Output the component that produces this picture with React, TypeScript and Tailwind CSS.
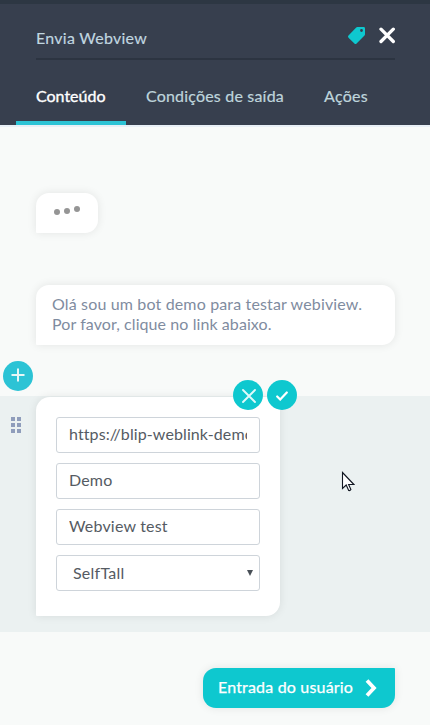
const shadow = 'shadow-[0_0_10px_rgba(0,0,0,0.09)]';

function Field({ children, tracking = 'tracking-[0.18px]' }: { children: string; tracking?: string }) {
  return (
    <div className="flex h-9 items-center overflow-hidden rounded-[3px] border border-[#ced4da] bg-white px-3 pb-[2px]">
      <span className={`flex-1 overflow-hidden whitespace-nowrap ${tracking}`}>{children}</span>
    </div>
  );
}

function Tag() {
  return (
    <svg className="mt-px h-[17px] w-[17px]" viewBox="0 0 17 17">
      <path fillRule="evenodd" fill="#0ec8cf" d="M9.400 0h6.200Q17 0 17 1.400v5.800q0 .7-.5 1.200l-7.900 8.100q-1.100 1-2.200 0L.5 10.700q-1-1.100 0-2.200L8.200.5Q8.700 0 9.400 0zM13.500 2.100a1.400 1.400 0 1 0 0 2.800 1.400 1.400 0 0 0 0-2.800z" />
    </svg>
  );
}

export default function App() {
  return (
    <div className="flex h-[725px] w-[430px] flex-col overflow-hidden bg-[#f8faf9] font-['Lato','Noto_Sans',sans-serif] text-base leading-6">
      <header className="h-[127px] shrink-0 border-t-4 border-b-2 border-t-[#2d3743] border-b-[#e8eff6] bg-[#373f4e]">
        <div className="mr-[35px] ml-9 flex h-14 border-b-2 border-[#2c3441] pt-[22px]">
          <span className="flex-1 tracking-[0.26px] text-[#c1d7e0] [-webkit-text-stroke:0.15px_#c1d7e0]">Envia Webview</span>
          <Tag />
          <svg className="mt-px -mr-px ml-[13px] h-[17px] w-[18px]" viewBox="0 0 18 17" fill="none" stroke="#fff" strokeWidth="3.3" strokeLinecap="round">
            <path d="M3 2.200l12.300 12.300M15.300 2.200L3 14.500" />
          </svg>
        </div>
        <nav className="ml-4 flex h-[65px] text-[#bfd5dc]">
          <div className="w-[110px] border-b-4 border-[#2cc3d5] pt-6 pl-5 text-white [-webkit-text-stroke:0.35px_#fff]">Conteúdo</div>
          <div className="w-[178px] pt-6 pl-5 tracking-[0.19px] [-webkit-text-stroke:0.2px_#bfd5dc]">Condições de saída</div>
          <div className="pt-6 pl-5 tracking-[0.29px] [-webkit-text-stroke:0.2px_#bfd5dc]">Ações</div>
        </nav>
      </header>

      <main className="flex flex-1 flex-col">
        <div className={`mt-[66px] ml-9 h-10 w-[62px] rounded-[13px] rounded-bl-[1px] bg-white ${shadow}`}>
          <div className="flex gap-1 pt-[13px] pl-[18px]">
            <i className="mt-[3px] size-[6px] rounded-full bg-[#959595]" />
            <i className="mt-[1.500px] size-[6px] rounded-full bg-[#959595]" />
            <i className="size-[6px] rounded-full bg-[#959595]" />
          </div>
        </div>

        <div className={`mt-[52px] ml-9 h-[60px] w-[359px] rounded-[13px] rounded-bl-[1px] bg-white pt-[9px] pl-4 leading-5 text-[#7f8c9f] ${shadow}`}>
          <p className="tracking-[0.15px]">Olá sou um bot demo para testar webiview.</p>
          <p className="tracking-[0.08px]">Por favor, clique no link abaixo.</p>
        </div>

        <button className="mt-4 ml-[3px] flex size-[30px] items-center justify-center rounded-full bg-[#2cc3d5]">
          <svg className="-mt-[2px] size-[14px]" viewBox="0 0 14 14" stroke="#e7f7f7" strokeWidth="2">
            <path d="M7 .5v13M.5 7h13" />
          </svg>
        </button>

        <section className="relative mt-[5px] h-[236px] bg-[#ebf1f1] pt-px">
          <div className="flex">
            <div className="mt-5 ml-[11px] grid h-4 w-[10px] grid-cols-[4px_4px] grid-rows-[4px_4px_4px] gap-[2px]">
              {[0, 1, 2, 3, 4, 5].map((n) => (
                <i key={n} className="bg-[#8f9dbb]" />
              ))}
            </div>
            <div className={`ml-[15px] flex h-[219px] w-[244px] flex-col gap-[10px] rounded-[14px] rounded-bl-[1px] bg-white px-5 pt-5 text-[#555b63] ${shadow}`}>
              <Field tracking="tracking-[0.1px]">https://blip-weblink-demo</Field>
              <Field>Demo</Field>
              <Field>Webview test</Field>
              <div className="flex h-9 items-center justify-between rounded-[3px] border border-[#ced4da] pr-[6px] pl-4">
                <span className="tracking-[0.24px]">SelfTall</span>
                <svg className="-mt-px h-[6px] w-[6px]" viewBox="0 0 6 6">
                  <path d="M0 0h6L3 6z" fill="#495057" />
                </svg>
              </div>
            </div>
          </div>
          <div className="absolute -top-4 left-[233px] flex gap-1">
            <button className="flex size-[30px] items-center justify-center rounded-full bg-[#0ec8cf]">
              <svg className="mt-px ml-px size-[14px]" viewBox="0 0 14 14" stroke="#dffafa" strokeWidth="1.900" strokeLinecap="round">
                <path d="M1 1l12 12M13 1L1 13" />
              </svg>
            </button>
            <button className="flex size-[30px] items-center justify-center rounded-full bg-[#0ec8cf]">
              <svg className="mt-px h-[10px] w-3" viewBox="0 0 12 10" fill="none" stroke="#fff" strokeWidth="2.200" strokeLinecap="round">
                <path d="M1.200 5.500l3 3L10.800 1.500" />
              </svg>
            </button>
          </div>
        </section>

        <button className={`mt-9 mr-[35px] flex h-10 w-48 items-center self-end rounded-[13px] rounded-tr-[1px] bg-[#0ec8cf] pl-[15px] text-white ${shadow}`}>
          <span className="w-[147px] pb-[2px] text-left tracking-[0.18px] whitespace-nowrap [-webkit-text-stroke:0.25px_#fff]">Entrada do usuário</span>
          <svg className="h-[18px] w-3" viewBox="0 0 12 18" fill="none" stroke="#fff" strokeWidth="3.800">
            <path d="M2 1.500L9 9l-7 7.500" />
          </svg>
        </button>
      </main>

      <svg className="absolute top-[471px] left-[341px] h-[22px] w-[14px]" viewBox="0 0 14 22">
        <path d="M1.500 1.500v16l3.700-3.500 2.500 5.500q1.500.4 2.200-1l-2.300-5h5.300z" fill="#fff" stroke="#111722" strokeWidth="1.100" />
      </svg>
    </div>
  );
}
